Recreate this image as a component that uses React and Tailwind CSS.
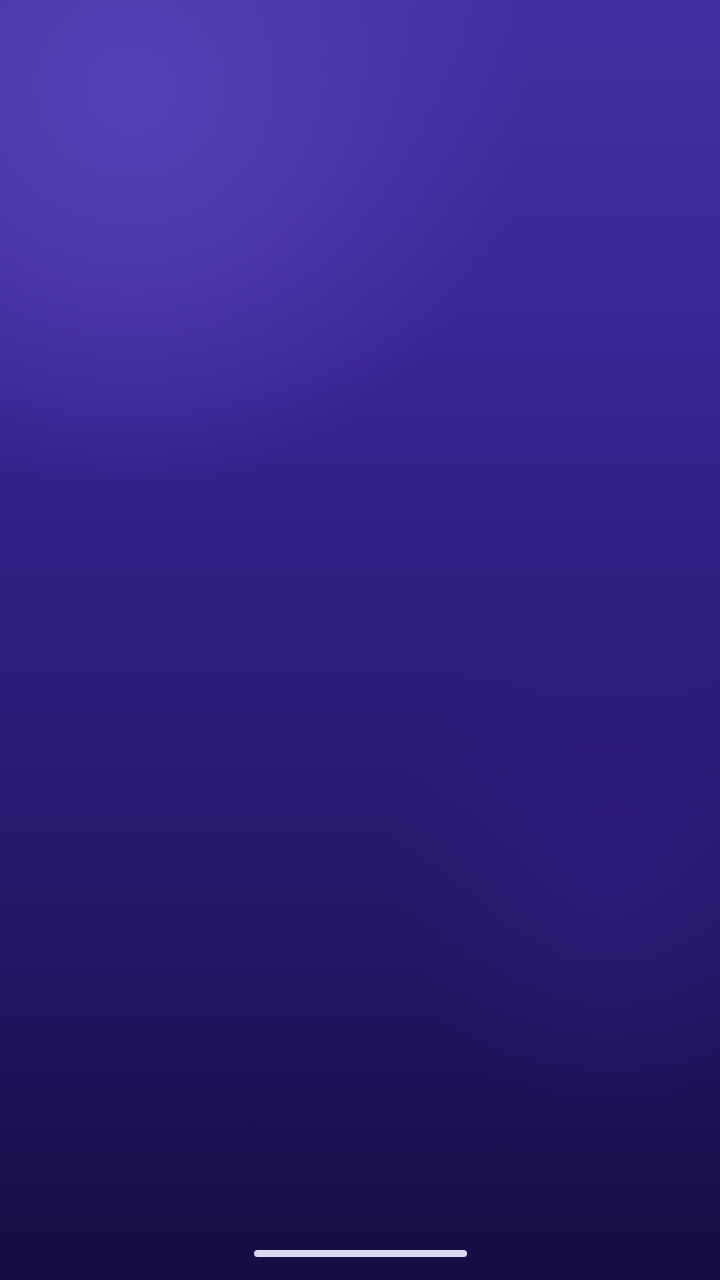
export default function App() {
  return (
    <div className="relative w-[720px] h-[1280px] overflow-hidden flex flex-col justify-end items-center bg-[radial-gradient(ellipse_400px_400px_at_130px_90px,#5540b8_0%,rgba(80,58,176,0.9)_40%,transparent_100%),radial-gradient(ellipse_220px_260px_at_610px_860px,rgba(48,28,128,0.7),transparent),linear-gradient(to_bottom,#4230a2_0%,#3a2694_25%,#2f1e80_45%,#2a1a74_62%,#221765_75%,#1b1252_88%,#150d42_100%)]">
      <div className="mb-[23px] w-[213px] h-[7px] rounded-full bg-[#dcd8ee]" />
    </div>
  );
}
